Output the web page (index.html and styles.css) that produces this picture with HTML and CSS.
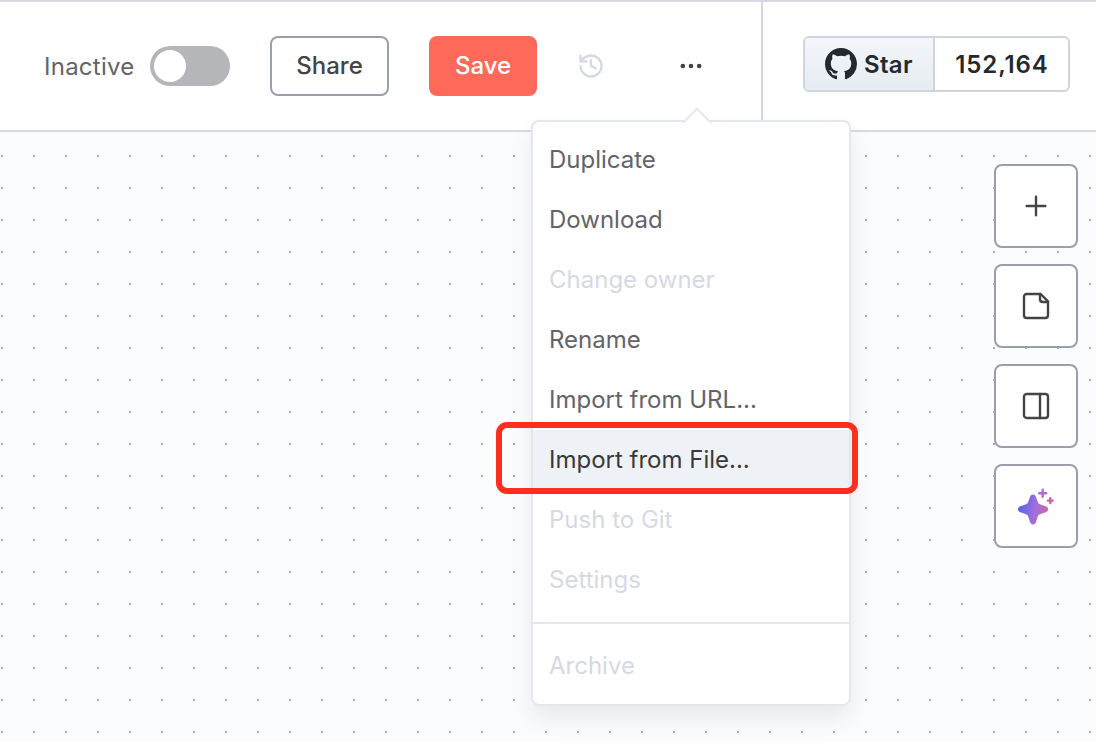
FILE: index.html
```html
<!DOCTYPE html>
<html lang="en">
<head>
<meta charset="utf-8">
<title>Workflow editor</title>
<link rel="stylesheet" href="styles.css">
</head>
<body>
<div class="app">
  <header class="header">
    <div class="workflow-actions">
      <span class="status">Inactive</span>
      <span class="toggle"><span class="knob"></span></span>
      <button class="btn btn-share">Share</button>
      <button class="btn btn-save">Save</button>
      <svg class="icon icon-history" viewBox="0 0 24 24"><path d="M3 12a9 9 0 1 0 9-9 9.75 9.75 0 0 0-6.74 2.74L3 8"/><path d="M3 3v5h5"/><path d="M12 7v5l4 2"/></svg>
      <div class="more">
        <svg class="icon icon-more" viewBox="0 0 24 24"><circle cx="5" cy="12" r="1"/><circle cx="12" cy="12" r="1"/><circle cx="19" cy="12" r="1"/></svg>
        <div class="menu">
          <ul class="menu-list">
            <li class="item">Duplicate</li>
            <li class="item">Download</li>
            <li class="item disabled">Change owner</li>
            <li class="item">Rename</li>
            <li class="item">Import from URL...</li>
            <li class="item active">Import from File...<span class="highlight"></span></li>
            <li class="item disabled">Push to Git</li>
            <li class="item disabled">Settings</li>
            <li class="item disabled divided">Archive</li>
          </ul>
        </div>
      </div>
    </div>
    <div class="github">
      <div class="star-widget">
        <span class="star"><svg class="mark" viewBox="0 0 16 16"><path d="M8 0C3.58 0 0 3.58 0 8c0 3.54 2.29 6.53 5.47 7.59.4.07.55-.17.55-.38 0-.19-.01-.82-.01-1.49-2.01.37-2.53-.49-2.69-.94-.09-.23-.48-.94-.82-1.13-.28-.15-.68-.52-.01-.53.63-.01 1.08.58 1.23.82.72 1.21 1.87.87 2.33.66.07-.52.28-.87.51-1.07-1.78-.2-3.64-.89-3.64-3.95 0-.87.31-1.59.82-2.15-.08-.2-.36-1.02.08-2.12 0 0 .67-.21 2.2.82.64-.18 1.32-.27 2-.27s1.36.09 2 .27c1.53-1.04 2.2-.82 2.2-.82.44 1.1.16 1.92.08 2.12.51.56.82 1.27.82 2.15 0 3.07-1.87 3.75-3.65 3.95.29.25.54.73.54 1.48 0 1.07-.01 1.93-.01 2.2 0 .21.15.46.55.38A8.01 8.01 0 0 0 16 8c0-4.42-3.58-8-8-8z"/></svg><span class="star-label">Star</span></span>
        <span class="count">152,164</span>
      </div>
    </div>
  </header>
  <main class="canvas">
    <div class="tools">
      <button class="tool"><svg class="icon" viewBox="0 0 24 24"><path d="M5 12h14M12 5v14"/></svg></button>
      <button class="tool"><svg class="icon" viewBox="0 0 24 24"><path d="M15.500 3H5a2 2 0 0 0-2 2v14a2 2 0 0 0 2 2h14a2 2 0 0 0 2-2V8.500Z"/><path d="M15 3v4a2 2 0 0 0 2 2h4"/></svg></button>
      <button class="tool"><svg class="icon" viewBox="0 0 24 24"><rect x="3" y="3" width="18" height="18" rx="2"/><path d="M15 3v18"/></svg></button>
      <button class="tool"><svg class="sparkles" viewBox="0 0 40 40">
        <defs><linearGradient id="ai" gradientUnits="userSpaceOnUse" x1="2" y1="20" x2="36" y2="28"><stop offset="0" stop-color="#5b60e8"/><stop offset=".5" stop-color="#a070dc"/><stop offset="1" stop-color="#dc6090"/></linearGradient></defs>
        <path fill="url(#ai)" d="M17 7.500c1.600 0 2.600 1 3 2.500l1.600 4.600c.5 1.700 1.300 2.500 3 3l5.100 1.700c1.500.5 2.400 1.500 2.400 3s-.9 2.400-2.400 2.900l-5.100 1.700c-1.700.5-2.500 1.300-3 3L20 35c-.4 1.500-1.400 2.500-3 2.500s-2.600-1-3-2.500l-1.600-5.100c-.5-1.700-1.300-2.500-3-3l-5.100-1.700C2.800 24.700 2 23.700 2 22.300s.8-2.500 2.300-3l5.100-1.700c1.700-.5 2.500-1.300 3-3L14 10c.4-1.500 1.400-2.500 3-2.500z"/>
        <path class="twinkles" stroke="url(#ai)" d="M26.700 2.700v7M23.200 6.200h7M34.300 11.200v4.800M31.900 13.600h4.800"/></svg></button>
    </div>
  </main>
</div>
</body>
</html>
```
FILE: styles.css
```css
* { box-sizing: border-box; }

body {
  margin: 0;
  font-family: Inter, sans-serif;
  font-size: 24px;
  color: #636469;
}

.app {
  display: flex;
  flex-direction: column;
  width: 1096px;
  height: 742px;
  overflow: hidden;
}

.header {
  display: flex;
  flex: none;
  height: 132px;
  background: #fff;
  border-top: 2px solid #d5d9e4;
  border-bottom: 2px solid #d5d9e4;
}

.workflow-actions {
  display: flex;
  align-items: center;
  width: 763px;
  padding-left: 44px;
  border-right: 2px solid #d5d9e4;
}

.status { width: 106px; line-height: 30px; padding-top: 1px; letter-spacing: .25px; }

.toggle {
  width: 80px;
  height: 40px;
  padding: 4px;
  border-radius: 20px;
  background: #b5b6ba;
}

.knob {
  display: block;
  width: 32px;
  height: 32px;
  border-radius: 50%;
  background: #fff;
}

.btn {
  height: 60px;
  margin: 0 0 0 40px;
  padding: 0 0 1px;
  border: 2px solid #9a9fad;
  border-radius: 8px;
  background: #fff;
  color: #444;
  font: 500 24px/30px Inter, sans-serif;
}

.btn-share { width: 119px; }
.btn-save { width: 108px; color: #fff; background: #ff6959; border-color: #ff6959; }

.icon {
  display: block;
  width: 32px;
  height: 32px;
  fill: none;
  stroke: #444;
  stroke-width: 1.8;
  stroke-linecap: round;
  stroke-linejoin: round;
}

.icon-history { width: 28px; height: 28px; margin-left: 40px; stroke: #d5d9e4; stroke-width: 2; }

.more { position: relative; margin-left: 72px; }
.icon-more { width: 28px; height: 28px; stroke-width: 2; fill: #444; }

.menu {
  position: absolute;
  z-index: 2;
  top: 68px;
  left: -146px;
  width: 320px;
  border: 2px solid #e3e7f0;
  border-radius: 8px;
  background: #fff;
  box-shadow: 0 12px 24px rgba(0, 0, 0, .08);
}

.menu::before {
  content: "";
  position: absolute;
  top: -10px;
  left: 153px;
  width: 18px;
  height: 18px;
  border: 2px solid #e3e7f0;
  border-right-color: transparent;
  border-bottom-color: transparent;
  background: linear-gradient(135deg, #fff 55%, transparent 55%);
  transform: rotate(45deg);
}

.menu-list { margin: 0; padding: 8px 0; list-style: none; }

.item {
  position: relative;
  height: 60px;
  padding: 0 16px;
  line-height: 60px;
  white-space: nowrap;
}

.disabled { color: #d5d9e4; }
.active { color: #38393c; background: #eef1f6; }

.divided {
  height: 74px;
  margin-top: 12px;
  padding-top: 12px;
  border-top: 2px solid #e3e7f0;
}

.highlight {
  position: absolute;
  top: -8px;
  left: -37px;
  width: 362px;
  height: 72px;
  border: 6px solid #ff2e1f;
  border-radius: 11px;
}

.github { flex: 1; padding: 34px 0 0 40px; }

.star-widget {
  display: flex;
  width: 267px;
  height: 56px;
  overflow: hidden;
  border: 2px solid #cdd6df;
  border-radius: 6px;
  color: #24292f;
  font-weight: 600;
  line-height: 54px;
}

.star {
  display: flex;
  align-items: center;
  width: 130px;
  padding-left: 20px;
  gap: 7px;
  border-right: 2px solid #cdd6df;
  background: linear-gradient(#f3f6fa, #e7ecf0);
}

.star-label { height: 52px; letter-spacing: .3px; }

.mark { width: 32px; height: 32px; fill: #24292f; }
.count { flex: 1; padding-left: 1px; text-align: center; letter-spacing: .9px; }

.canvas {
  flex: 1;
  padding: 32px 18px;
  background: #fbfcfe conic-gradient(from 90deg at 30px 30px, #aaabad 90deg, transparent 0) -29px -7px / 32px 32px;
}

.tools { display: flex; flex-direction: column; align-items: flex-end; gap: 16px; }

.tool {
  display: flex;
  align-items: center;
  justify-content: center;
  width: 84px;
  height: 84px;
  padding: 0;
  border: 2px solid #9a9fad;
  border-radius: 8px;
  background: #fff;
}

.sparkles { width: 40px; height: 40px; margin-top: 2px; }
.twinkles { fill: none; stroke-width: 2.4; stroke-linecap: round; }
```
